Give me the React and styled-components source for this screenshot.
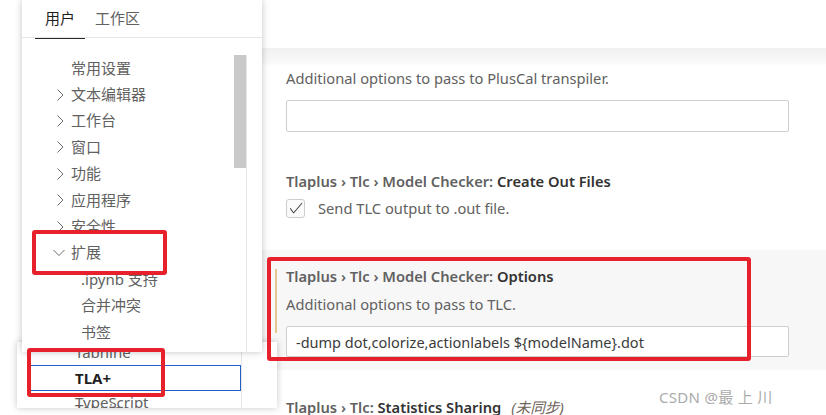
import React from "react";
import styled, { createGlobalStyle, css } from "styled-components";

const FONT = `"Noto Sans", "Noto Sans CJK SC", sans-serif`;

const GlobalStyle = createGlobalStyle`
  html, body { margin: 0; padding: 0; background: #fff; }
  body { font-family: ${FONT}; }
  * { box-sizing: border-box; }
`;

const Stage = styled.div`
  position: relative;
  width: 826px;
  height: 415px;
  overflow: hidden;
  background: #fff;
  font-family: ${FONT};
`;

/* ---------- settings editor (right) ---------- */
const Editor = styled.main`
  margin-left: 262px;
  height: 100%;
  display: flex;
  flex-direction: column;
`;

const EditorHeader = styled.header`
  position: relative;
  flex: 0 0 49px;
  border-bottom: 1px solid #e3e3e3;
  &::after {
    content: "";
    position: absolute;
    left: 0;
    right: 0;
    top: 100%;
    height: 18px;
    background: linear-gradient(#f1f1f1, #f8f8f8 75%, rgba(255, 255, 255, 0));
  }
`;

const SettingItem = styled.section`
  position: relative;
  display: flex;
  flex-direction: column;
  padding: ${(p) => p.$pt}px 37px ${(p) => p.$pb}px 24px;
  background: ${(p) => (p.$focused ? "#f7f7f7" : "transparent")};
  ${(p) =>
    p.$modified &&
    css`
      &::before {
        content: "";
        position: absolute;
        left: 13px;
        top: 19px;
        width: 2px;
        height: 64px;
        background: #e3c78e;
      }
    `}
`;

const SettingTitle = styled.div`
  font-size: 14.7px;
  line-height: 20px;
  font-weight: 600;
  color: #333333;
  white-space: nowrap;
`;

const Category = styled.span`
  color: #616161;
`;

const Unsynced = styled.span`
  font-weight: 400;
  font-style: italic;
  color: #6e6259;
  margin-left: 10px;
`;

const Description = styled.div`
  margin-top: ${(p) => p.$mt}px;
  font-size: 14.7px;
  line-height: 20px;
  color: #616161;
  white-space: nowrap;
`;

const TextInput = styled.input`
  margin-top: 12px;
  height: ${(p) => p.$h}px;
  width: 100%;
  border: 1px solid #cecece;
  border-radius: 2px;
  background: #fff;
  padding: 0 9px;
  font-family: ${FONT};
  font-size: 14.5px;
  color: #3b3b3b;
  outline: none;
`;

const CheckRow = styled.label`
  margin-top: 7px;
  height: 20px;
  display: flex;
  align-items: center;
  font-size: 14.7px;
  color: #616161;
  white-space: nowrap;
`;

const CheckBox = styled.span`
  width: 19px;
  height: 19px;
  margin-right: 13px;
  border: 1px solid #cdcdcd;
  border-radius: 3px;
  background: #fbfbfb;
  display: flex;
  align-items: center;
  justify-content: center;
  svg { display: block; }
`;

/* ---------- table of contents popup (left) ---------- */
const TocPanel = styled.aside`
  position: absolute;
  left: 22px;
  top: 0;
  width: 240px;
  height: 352px;
  z-index: 2;
  background: #fff;
  box-shadow: 0 0 7px rgba(0, 0, 0, 0.24);
  display: flex;
  flex-direction: column;
`;

const TabBar = styled.nav`
  flex: 0 0 38px;
  display: flex;
  padding-left: 13px;
  border-bottom: 1px solid #e5e5e5;
`;

const Tab = styled.div`
  position: relative;
  padding: 0 10px;
  line-height: 36px;
  font-size: 15px;
  color: ${(p) => (p.$active ? "#1f1f1f" : "#616161")};
  ${(p) =>
    p.$active &&
    css`
      &::after {
        content: "";
        position: absolute;
        left: 0;
        right: 0;
        bottom: -2px;
        height: 1px;
        background: #2b2b2b;
      }
    `}
`;

const TocBody = styled.div`
  flex: 1;
  margin-top: 17px;
  width: 225px;
  border-right: 1px solid #e5e5e5;
  display: grid;
  grid-template-columns: 1fr 12px;
  overflow: hidden;
`;

const TreeList = styled.ul`
  list-style: none;
  margin: 0;
  padding: 0;
`;

const TreeRow = styled.li`
  height: 26.4px;
  display: flex;
  align-items: center;
  padding-left: ${(p) => 30 + p.$level * 10}px;
  padding-bottom: 2px;
  font-size: 15px;
  color: #616161;
  white-space: nowrap;
`;

const Twistie = styled.span`
  flex: 0 0 16px;
  height: 16px;
  margin-right: 3px;
  margin-top: 2px;
  display: flex;
  align-items: center;
  justify-content: center;
  svg { display: block; }
`;

const ScrollTrack = styled.div`
  position: relative;
`;

const ScrollThumb = styled.div`
  height: 113px;
  background: #c9c9c9;
`;

/* ---------- second list popup (lower left) ---------- */
const LowerPanel = styled.aside`
  position: absolute;
  left: 17px;
  top: 342px;
  width: 260px;
  height: 66px;
  z-index: 1;
  background: #fff;
  box-shadow: 0 0 7px rgba(0, 0, 0, 0.22);
  overflow: hidden;
`;

const LowerList = styled.ul`
  list-style: none;
  margin: 0;
  padding: 0;
  width: 225px;
  height: 100%;
  border-right: 1px solid #e5e5e5;
  display: flex;
  flex-direction: column;
`;

const LowerRow = styled.li`
  flex: 0 0 26px;
  margin-left: 13px;
  margin-top: ${(p) => p.$mt || 0}px;
  padding-left: 44px;
  display: flex;
  align-items: center;
  border: 1px solid ${(p) => (p.$selected ? "#2160c4" : "transparent")};
  font-size: 15px;
  font-weight: ${(p) => (p.$selected ? 700 : 400)};
  color: ${(p) => (p.$selected ? "#1e1e1e" : "#616161")};
  white-space: nowrap;
`;

/* ---------- annotations ---------- */
const Callout = styled.div`
  position: absolute;
  left: ${(p) => p.$x}px;
  top: ${(p) => p.$y}px;
  width: ${(p) => p.$w}px;
  height: ${(p) => p.$h}px;
  border: 4px solid #e6212b;
  border-radius: 3px;
  z-index: 5;
  pointer-events: none;
`;

const Watermark = styled.div`
  position: absolute;
  left: 659px;
  top: 386px;
  z-index: 5;
  font-size: 15px;
  line-height: 22px;
  letter-spacing: 0.3px;
  color: #ababab;
  white-space: nowrap;
`;

const ChevronRight = () => (
  <svg width="16" height="16" viewBox="0 0 16 16" fill="none">
    <path d="M5.5 2.5 L11 8 L5.5 13.5" stroke="#6b6b6b" strokeWidth="1" />
  </svg>
);

const ChevronDown = () => (
  <svg width="16" height="16" viewBox="0 0 16 16" fill="none">
    <path d="M1.5 5 L7 10.5 L12.5 5" stroke="#6b6b6b" strokeWidth="1" />
  </svg>
);

const CheckIcon = () => (
  <svg width="16" height="16" viewBox="0 0 16 16">
    <path
      fill="#3c3c3c"
      d="M14.431 3.323l-8.47 10-.79-.036-3.35-4.77.818-.574 2.978 4.24 8.051-9.506.764.646z"
    />
  </svg>
);

const tocItems = [
  { label: "常用设置", level: 0 },
  { label: "文本编辑器", level: 0, twistie: "right" },
  { label: "工作台", level: 0, twistie: "right" },
  { label: "窗口", level: 0, twistie: "right" },
  { label: "功能", level: 0, twistie: "right" },
  { label: "应用程序", level: 0, twistie: "right" },
  { label: "安全性", level: 0, twistie: "right" },
  { label: "扩展", level: 0, twistie: "down" },
  { label: ".ipynb 支持", level: 1 },
  { label: "合并冲突", level: 1 },
  { label: "书签", level: 1 },
];

const lowerItems = [
  { label: "Tabnine", mt: -3 },
  { label: "TLA+", selected: true },
  { label: "TypeScript", mt: -2 },
  { label: "Tabnine", mt: -19 },
];

export default function App() {
  return (
    <>
      <GlobalStyle />
      <Stage>
        <Editor>
          <EditorHeader />
          <SettingItem $pt={19} $pb={0}>
            <Description $mt={0}>Additional options to pass to PlusCal transpiler.</Description>
            <TextInput $h={32} readOnly value="" />
          </SettingItem>
          <SettingItem $pt={39} $pb={32}>
            <SettingTitle>
              <Category>Tlaplus › Tlc › Model Checker: </Category>Create Out Files
            </SettingTitle>
            <CheckRow>
              <CheckBox>
                <CheckIcon />
              </CheckBox>
              Send TLC output to .out file.
            </CheckRow>
          </SettingItem>
          <SettingItem $pt={16} $pb={13} $focused $modified>
            <SettingTitle>
              <Category>Tlaplus › Tlc › Model Checker: </Category>Options
            </SettingTitle>
            <Description $mt={8}>Additional options to pass to TLC.</Description>
            <TextInput $h={31} readOnly value="-dump dot,colorize,actionlabels ${modelName}.dot" />
          </SettingItem>
          <SettingItem $pt={27} $pb={0}>
            <SettingTitle>
              <Category>Tlaplus › Tlc: </Category>Statistics Sharing
              <Unsynced>(未同步)</Unsynced>
            </SettingTitle>
          </SettingItem>
        </Editor>

        <TocPanel>
          <TabBar>
            <Tab $active>用户</Tab>
            <Tab>工作区</Tab>
          </TabBar>
          <TocBody>
            <TreeList>
              {tocItems.map((it, i) => (
                <TreeRow key={i} $level={it.level}>
                  <Twistie>
                    {it.twistie === "right" && <ChevronRight />}
                    {it.twistie === "down" && <ChevronDown />}
                  </Twistie>
                  {it.label}
                </TreeRow>
              ))}
            </TreeList>
            <ScrollTrack>
              <ScrollThumb />
            </ScrollTrack>
          </TocBody>
        </TocPanel>

        <LowerPanel>
          <LowerList>
            {lowerItems.map((it, i) => (
              <LowerRow key={i} $selected={it.selected} $mt={it.mt}>
                {it.label}
              </LowerRow>
            ))}
          </LowerList>
        </LowerPanel>

        <Callout $x={32} $y={230} $w={135} $h={45} />
        <Callout $x={27} $y={348} $w={138} $h={49} />
        <Callout $x={267} $y={257} $w={484} $h={104} />

        <Watermark>CSDN @最 上 川</Watermark>
      </Stage>
    </>
  );
}
